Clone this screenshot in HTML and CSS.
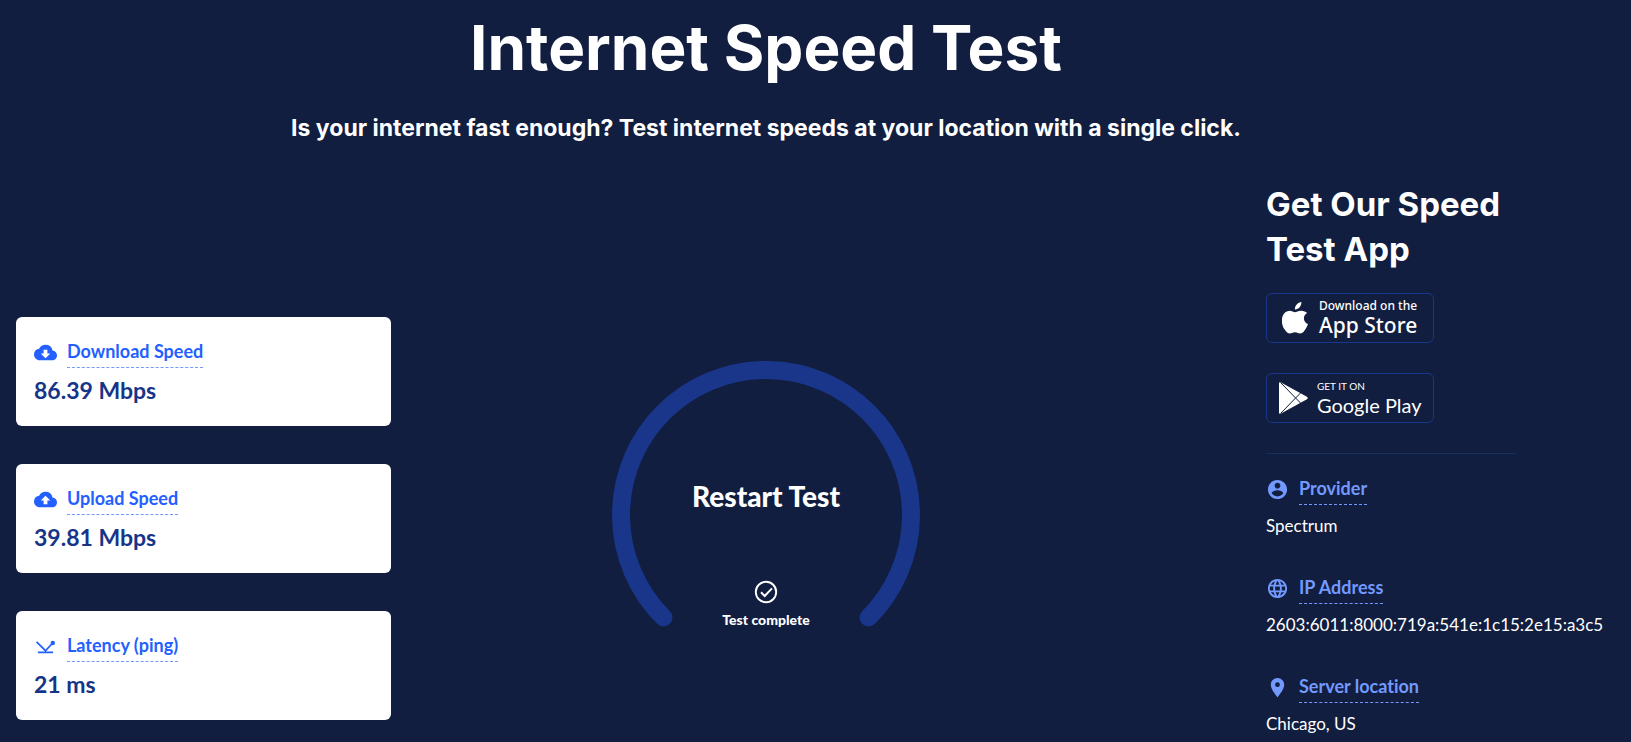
FILE: index.html
```html
<!DOCTYPE html>
<html lang="en">
<head>
<meta charset="utf-8">
<title>Internet Speed Test</title>
<link rel="stylesheet" href="styles.css">
</head>
<body>
<main class="page">
  <header class="intro">
    <h1 class="title">Internet Speed Test</h1>
    <p class="subtitle">Is your internet fast enough? Test internet speeds at your location with a single click.</p>
  </header>
  <div class="layout">
    <section class="results" aria-label="Results">
      <article class="card">
        <div class="label-row">
          <svg class="icon" viewBox="0 0 24 24" aria-hidden="true"><path fill="currentColor" d="M19.35 10.04A7.49 7.49 0 0 0 12 4C9.11 4 6.6 5.64 5.35 8.04A5.994 5.994 0 0 0 0 14c0 3.31 2.69 6 6 6h13c2.76 0 5-2.24 5-5 0-2.64-2.05-4.78-4.65-4.96zM17 13l-5 5-5-5h3V9h4v4h3z"/></svg>
          <button class="term" type="button">Download Speed</button>
        </div>
        <p class="value">86.39 Mbps</p>
      </article>
      <article class="card">
        <div class="label-row">
          <svg class="icon" viewBox="0 0 24 24" aria-hidden="true"><path fill="currentColor" d="M19.35 10.04A7.49 7.49 0 0 0 12 4C9.11 4 6.6 5.64 5.35 8.04A5.994 5.994 0 0 0 0 14c0 3.31 2.69 6 6 6h13c2.76 0 5-2.24 5-5 0-2.64-2.05-4.78-4.65-4.96zM14 13v4h-4v-4H7l5-5 5 5h-3z"/></svg>
          <button class="term" type="button">Upload Speed</button>
        </div>
        <p class="value">39.81 Mbps</p>
      </article>
      <article class="card">
        <div class="label-row">
          <svg class="icon" viewBox="0 0 24 24" aria-hidden="true"><path fill="none" stroke="currentColor" stroke-width="1.8" d="M2.7 7.2 12 16.4l7-7.5M4 18.2h16"/><circle cx="19.6" cy="8.3" r="2.3" fill="currentColor"/></svg>
          <button class="term" type="button">Latency (ping)</button>
        </div>
        <p class="value">21 ms</p>
      </article>
    </section>

    <section class="dial" aria-label="Speed test">
      <svg class="dial-arc" viewBox="0 0 308 308" aria-hidden="true"><path fill="none" stroke="#1a368b" stroke-width="18" stroke-linecap="round" d="M51.5 256.5a145 145 0 1 1 205 0"/></svg>
      <div class="dial-face">
        <button class="restart" type="button">Restart Test</button>
        <svg class="icon check" viewBox="0 0 24 24" aria-hidden="true"><circle cx="12" cy="12" r="10.2" fill="none" stroke="currentColor" stroke-width="1.9"/><path fill="none" stroke="currentColor" stroke-width="2" d="m7 12.3 3.7 3.7L18 8.4"/></svg>
        <p class="status">Test complete</p>
      </div>
    </section>

    <aside class="side">
      <h2 class="side-title">Get Our Speed Test App</h2>
      <a class="badge" href="#app-store">
        <svg class="apple" viewBox="0 0 26 32" aria-hidden="true"><path fill="currentColor" d="M19.4 0c.2 2-.6 3.900-1.800 5.300-1.200 1.400-2.900 2.300-4.700 2.200-.2-1.900.7-3.800 1.800-5C15.900 1.100 17.800.1 19.400 0zM25.100 10.900c-2 1.200-3.200 3-3.200 5.300 0 2.700 1.600 4.900 4.100 5.900-.6 1.900-1.500 3.600-2.600 5.200-1.400 2.100-2.800 4.200-5.100 4.200-2.200 0-2.900-1.300-5.400-1.300s-3.300 1.300-5.400 1.300c-2.200 0-3.800-2.300-5.200-4.400C-.3 23.200-.9 17.400.9 13.500c1.400-2.900 3.900-4.700 6.600-4.800 2.200 0 4.200 1.500 5.500 1.500s3.800-1.800 6.400-1.500c2.300.1 4.300 1 5.700 2.200z"/></svg>
        <span class="badge-text apple-text"><span class="badge-small">Download on the</span><span class="badge-big">App Store</span></span>
      </a>
      <a class="badge" href="#google-play">
        <svg class="play" viewBox="0 0 29 32" aria-hidden="true"><path fill="currentColor" d="M0 1.500C0 .3 1 0 2 .5l25.500 14q2.500 1.500 0 3L2 31.500c-1 .5-2 .2-2-1z"/><path fill="none" stroke="#111e3f" d="m1.500.5 20 20.500M1.500 31.500l20-20.500"/></svg>
        <span class="badge-text play-text"><span class="badge-small">GET IT ON</span><span class="badge-big">Google Play</span></span>
      </a>
      <hr class="rule">
      <div class="fact">
        <div class="label-row">
          <svg class="icon" viewBox="0 0 24 24" aria-hidden="true"><path fill="currentColor" d="M12 2C6.480 2 2 6.480 2 12s4.480 10 10 10 10-4.480 10-10S17.520 2 12 2zm0 3c1.660 0 3 1.340 3 3s-1.340 3-3 3-3-1.340-3-3 1.340-3 3-3zm0 14.200c-2.500 0-4.710-1.280-6-3.220.03-1.990 4-3.080 6-3.080 1.990 0 5.970 1.090 6 3.080-1.290 1.940-3.500 3.220-6 3.220z"/></svg>
          <button class="term" type="button">Provider</button>
        </div>
        <p class="fact-value">Spectrum</p>
      </div>
      <div class="fact">
        <div class="label-row">
          <svg class="icon" viewBox="0 0 24 24" aria-hidden="true"><path fill="currentColor" d="M11.990 2C6.470 2 2 6.480 2 12s4.470 10 9.990 10C17.520 22 22 17.520 22 12S17.520 2 11.990 2zm6.930 6h-2.950a15.650 15.650 0 0 0-1.380-3.560A8.030 8.030 0 0 1 18.920 8zM12 4.040c.83 1.200 1.480 2.530 1.910 3.960h-3.820c.43-1.430 1.080-2.760 1.910-3.960zM4.260 14C4.100 13.360 4 12.690 4 12s.1-1.360.26-2h3.380c-.08.660-.14 1.320-.14 2s.06 1.340.14 2H4.260zm.82 2h2.950c.32 1.250.78 2.450 1.380 3.560A7.987 7.987 0 0 1 5.080 16zm2.950-8H5.080a7.987 7.987 0 0 1 4.330-3.560A15.650 15.650 0 0 0 8.030 8zM12 19.960c-.83-1.200-1.480-2.530-1.910-3.960h3.820c-.43 1.430-1.080 2.760-1.910 3.960zM14.340 14H9.660c-.09-.66-.16-1.320-.16-2s.07-1.350.16-2h4.680c.09.650.16 1.320.16 2s-.07 1.340-.16 2zm.25 5.560c.6-1.110 1.060-2.310 1.380-3.560h2.950a8.030 8.030 0 0 1-4.330 3.560zM16.360 14c.08-.66.14-1.320.14-2s-.06-1.340-.14-2h3.380c.16.640.26 1.310.26 2s-.1 1.360-.26 2h-3.380z"/></svg>
          <button class="term" type="button">IP Address</button>
        </div>
        <p class="fact-value">2603:6011:8000:719a:541e:1c15:2e15:a3c5</p>
      </div>
      <div class="fact">
        <div class="label-row">
          <svg class="icon" viewBox="0 0 24 24" aria-hidden="true"><path fill="currentColor" d="M12 2C8.130 2 5 5.130 5 9c0 5.250 7 13 7 13s7-7.750 7-13c0-3.870-3.130-7-7-7zm0 9.500a2.500 2.500 0 0 1 0-5 2.500 2.500 0 0 1 0 5z"/></svg>
          <button class="term" type="button">Server location</button>
        </div>
        <p class="fact-value">Chicago, US</p>
      </div>
    </aside>
  </div>
</main>
</body>
</html>
```
FILE: styles.css
```css
* {
  box-sizing: border-box;
  margin: 0;
}

body {
  background: #111e3f;
  color: #fff;
  font-family: Lato, "Open Sans", sans-serif;
  font-size: 18px;
  font-variant-ligatures: none;
  line-height: 24px;
}

button {
  border: 0;
  padding: 0;
  background: none;
  color: inherit;
  font: inherit;
  font-variant-ligatures: none;
  cursor: pointer;
}

.page {
  padding: 8px 115px 0 16px;
}

.intro {
  text-align: center;
}

.title,
.subtitle,
.side-title {
  font-family: Inter, Lato, sans-serif;
  font-weight: 700;
}

.title {
  font-size: 62px;
  line-height: 80px;
}

.subtitle {
  margin-top: 24px;
  font-size: 23px;
  line-height: 32px;
}

.layout {
  display: grid;
  grid-template-columns: repeat(12, 1fr);
  margin-top: 38px;
}

.results {
  grid-column: span 3;
  display: flex;
  flex-direction: column;
  gap: 38px;
  padding-top: 135px;
}

.card {
  padding: 22px 18px 20px;
  border-radius: 6px;
  background: #fff;
  color: #2360ff;
}

.label-row {
  display: flex;
  align-items: flex-start;
  gap: 10px;
}

.icon {
  flex: none;
  width: 23px;
  height: 23px;
  margin-top: 2px;
}

.term {
  padding-bottom: 4px;
  border-bottom: 1px dashed #7399ff;
  font-weight: 700;
}

.value {
  margin-top: 6px;
  color: #163589;
  font-size: 23px;
  line-height: 32px;
  font-weight: 700;
}

.dial {
  grid-column: span 6;
  display: grid;
  justify-items: center;
  align-items: start;
  padding-top: 179px;
}

.dial-arc,
.dial-face {
  grid-area: 1 / 1;
  width: 308px;
  height: 308px;
}

.dial-face {
  display: flex;
  flex-direction: column;
  align-items: center;
  padding-top: 115px;
}

.restart {
  font-size: 28px;
  line-height: 40px;
  font-weight: 900;
}

.check {
  width: 24px;
  height: 24px;
  margin-top: 64px;
}

.status {
  margin-top: 6px;
  font-size: 14px;
  line-height: 20px;
  font-weight: 900;
}

.side {
  grid-column: 11 / span 2;
  min-width: 0;
}

.side-title {
  margin-bottom: 21px;
  font-size: 33px;
  line-height: 45px;
}

.badge {
  display: flex;
  align-items: center;
  width: 168px;
  height: 50px;
  margin-bottom: 30px;
  border: 1px solid #1a368b;
  border-radius: 6px;
  color: #fff;
  text-decoration: none;
  white-space: nowrap;
}

.apple {
  width: 26px;
  height: 32px;
  margin: 0 11px 0 15px;
}

.play {
  width: 29px;
  height: 32px;
  margin: 0 9px 0 12px;
}

.badge-text {
  display: flex;
  flex-direction: column;
  padding-bottom: 2px;
}

.badge-small {
  line-height: 16px;
}

.badge-big {
  line-height: 22px;
}

.apple-text {
  font-family: "Noto Sans", "Open Sans", sans-serif;
  font-weight: 500;
}

.apple-text .badge-small {
  font-size: 12px;
}

.apple-text .badge-big {
  font-size: 21px;
}

.play-text .badge-small {
  font-size: 10px;
}

.play-text .badge-big {
  font-size: 20px;
}

.rule {
  margin-bottom: 22px;
  border: 0;
  border-top: 1px solid #15305c;
}

.fact {
  margin-bottom: 36px;
  color: #7399ff;
}

.fact:last-child {
  margin-bottom: 0;
}

.fact-value {
  margin-top: 8px;
  color: #fff;
  font-size: 17px;
  line-height: 26px;
}
```
